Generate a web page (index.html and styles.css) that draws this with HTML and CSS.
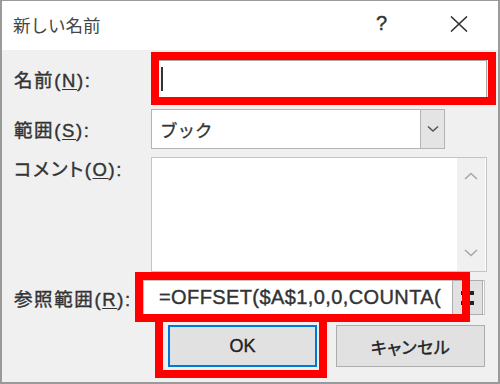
FILE: index.html
```html
<!DOCTYPE html>
<html lang="ja">
<head>
  <meta charset="UTF-8">
  <meta name="viewport" content="width=device-width, initial-scale=1.0">
  <title>新しい名前</title>
  <link rel="stylesheet" href="styles.css">
</head>
<body>
  <div class="dialog">
    <!-- Title bar -->
    <div class="titlebar">
      <span class="title">新しい名前</span>
      <span class="help">?</span>
      <svg class="close" width="18" height="16" viewBox="0 0 18 16">
        <path d="M1 0.5 L17 15.5 M17 0.5 L1 15.5" stroke="#333" stroke-width="1.6" fill="none"/>
      </svg>
    </div>

    <div class="content">
      <div class="row row-name">
        <label class="label">名前(<u>N</u>):</label>
        <div class="field name-field"><span class="caret"></span></div>
      </div>

      <div class="row row-scope">
        <label class="label">範囲(<u>S</u>):</label>
        <div class="combo">
          <span class="combo-text">ブック</span>
          <span class="combo-btn">
            <svg width="12" height="8" viewBox="0 0 12 8"><path d="M1 1.5 L6 6 L11 1.5" stroke="#555" stroke-width="1.6" fill="none"/></svg>
          </span>
        </div>
      </div>

      <div class="row row-comment">
        <label class="label">コメント(<u>O</u>):</label>
        <div class="textarea">
          <div class="scrollbar">
            <svg width="14" height="8" viewBox="0 0 14 8"><path d="M1 7 L7 1.5 L13 7" stroke="#a8a8a8" stroke-width="1.6" fill="none"/></svg>
            <svg width="14" height="8" viewBox="0 0 14 8"><path d="M1 1 L7 6.5 L13 1" stroke="#a8a8a8" stroke-width="1.6" fill="none"/></svg>
          </div>
        </div>
      </div>

      <div class="row row-ref">
        <label class="label">参照範囲(<u>R</u>):</label>
        <div class="field ref-field">
          <span class="ref-text">=OFFSET($A$1,0,0,COUNTA(</span>
          <span class="collapse-btn">
            <svg width="16" height="18" viewBox="0 0 16 18">
              <rect x="1" y="2" width="4" height="4" fill="#222"/>
              <rect x="10" y="2" width="4" height="4" fill="#222"/>
              <rect x="1" y="12" width="4" height="4" fill="#222"/>
              <rect x="10" y="12" width="4" height="4" fill="#222"/>
            </svg>
          </span>
        </div>
      </div>

      <div class="buttons">
        <button class="btn btn-ok">OK</button>
        <button class="btn btn-cancel">キャンセル</button>
      </div>
    </div>

    <!-- red annotation boxes -->
    <div class="mark mark-name"></div>
    <div class="mark mark-ref"></div>
    <div class="mark mark-ok"></div>
  </div>
</body>
</html>
```

FILE: styles.css
```css
/* General */
body {
  margin: 0;
  font-family: "Liberation Sans", "Noto Sans CJK JP", sans-serif;
  color: #2b2b2b;
}

.dialog {
  position: relative;
  width: 500px;
  height: 384px;
  background: #f0f0f0;
  overflow: hidden;
}

/* window frame */
.dialog::after {
  content: "";
  position: absolute;
  inset: 0;
  border: 2px solid #9a9a9a;
  border-top-width: 1px;
  pointer-events: none;
}

/* Title bar */
.titlebar {
  height: 50px;
  background: #ffffff;
  display: flex;
  align-items: center;
  padding: 0 32px 0 13px;
}

.title {
  font-size: 17.5px;
  color: #444;
  flex: 1;
  margin-top: -2px;
}

.help {
  font-size: 20px;
  color: #333;
  margin-right: 63px;
  margin-top: -3px;
  -webkit-text-stroke: 0.4px #333;
}

.close {
  margin-top: -2px;
}

/* Form */
.content {
  padding: 10px 13px 0 14px;
}

.row {
  display: flex;
  align-items: center;
}

.label {
  width: 137px;
  font-size: 18.5px;
  letter-spacing: 1.6px;
  color: #333;
  font-feature-settings: "palt";
  -webkit-text-stroke: 0.4px #333;
}

.label u {
  text-underline-offset: 2px;
}

.field {
  background: #fff;
  border: 1px solid #a8a8a8;
  box-sizing: border-box;
}

.row-name {
  height: 38px;
  margin-bottom: 11px;
}

.name-field {
  width: 336px;
  height: 38px;
  display: flex;
  align-items: center;
  padding-left: 9px;
}

.caret {
  width: 2px;
  height: 24px;
  background: #333;
}

/* Combo */
.row-scope {
  height: 40px;
  margin-bottom: 8px;
}

.combo {
  width: 294px;
  height: 40px;
  box-sizing: border-box;
  background: #fff;
  border: 1px solid #b4b4b4;
  display: flex;
  align-items: center;
}

.combo-text {
  flex: 1;
  padding-left: 8px;
  font-size: 17.5px;
  color: #333;
  -webkit-text-stroke: 0.3px #333;
}

.combo-btn {
  width: 24px;
  height: 38px;
  box-sizing: border-box;
  background: #e4e4e4;
  border-left: 1px solid #b4b4b4;
  display: flex;
  align-items: center;
  justify-content: center;
}

/* Comment */
.row-comment {
  align-items: flex-start;
  height: 115px;
  margin-bottom: 8px;
}

.row-comment .label {
  padding-top: 1px;
  line-height: 24px;
}

.textarea {
  width: 336px;
  height: 115px;
  box-sizing: border-box;
  background: #fff;
  border: 1px solid #c4c4c4;
  display: flex;
  justify-content: flex-end;
}

.scrollbar {
  width: 28px;
  margin-right: 1px;
  background: #f0f0f0;
  display: flex;
  flex-direction: column;
  align-items: center;
  justify-content: space-between;
  padding: 14px 0 14px;
}

/* Reference */
.row-ref {
  height: 35px;
  margin-bottom: 10px;
}

.row-ref .label {
  width: 129px;
}

.ref-field {
  width: 342px;
  height: 35px;
  display: flex;
  align-items: center;
  border-color: #c4c4c4;
}

.ref-text {
  flex: 1;
  padding-left: 15px;
  font-size: 20px;
  letter-spacing: 0.4px;
  color: #333;
  -webkit-text-stroke: 0.4px #333;
}

.collapse-btn {
  width: 31px;
  height: 35px;
  box-sizing: border-box;
  background: #e1e1e1;
  border: 1px solid #adadad;
  margin-right: 1px;
  display: flex;
  align-items: center;
  justify-content: center;
}

/* Buttons */
.buttons {
  display: flex;
  justify-content: flex-end;
  gap: 19px;
  padding-right: 2px;
}

.btn {
  width: 149px;
  height: 42px;
  background: #e1e1e1;
  border: 1px solid #adadad;
  font-family: "Liberation Sans", "Noto Sans CJK JP", sans-serif;
  font-size: 17px;
  color: #222;
  padding: 0;
  -webkit-text-stroke: 0.4px #222;
}

.btn-cancel {
  font-feature-settings: "palt";
  letter-spacing: 0.5px;
}

.btn-ok {
  border: 2px solid #0078d7;
  font-size: 18px;
}

/* Red annotation boxes */
.mark {
  position: absolute;
  border: 8px solid #ff0000;
  box-sizing: border-box;
  pointer-events: none;
}

.mark-name {
  left: 151px;
  top: 52px;
  width: 345px;
  height: 53px;
}

.mark-ref {
  left: 135px;
  top: 272px;
  width: 335px;
  height: 50px;
}

.mark-ok {
  left: 155px;
  top: 314px;
  width: 172px;
  height: 64px;
}
```
